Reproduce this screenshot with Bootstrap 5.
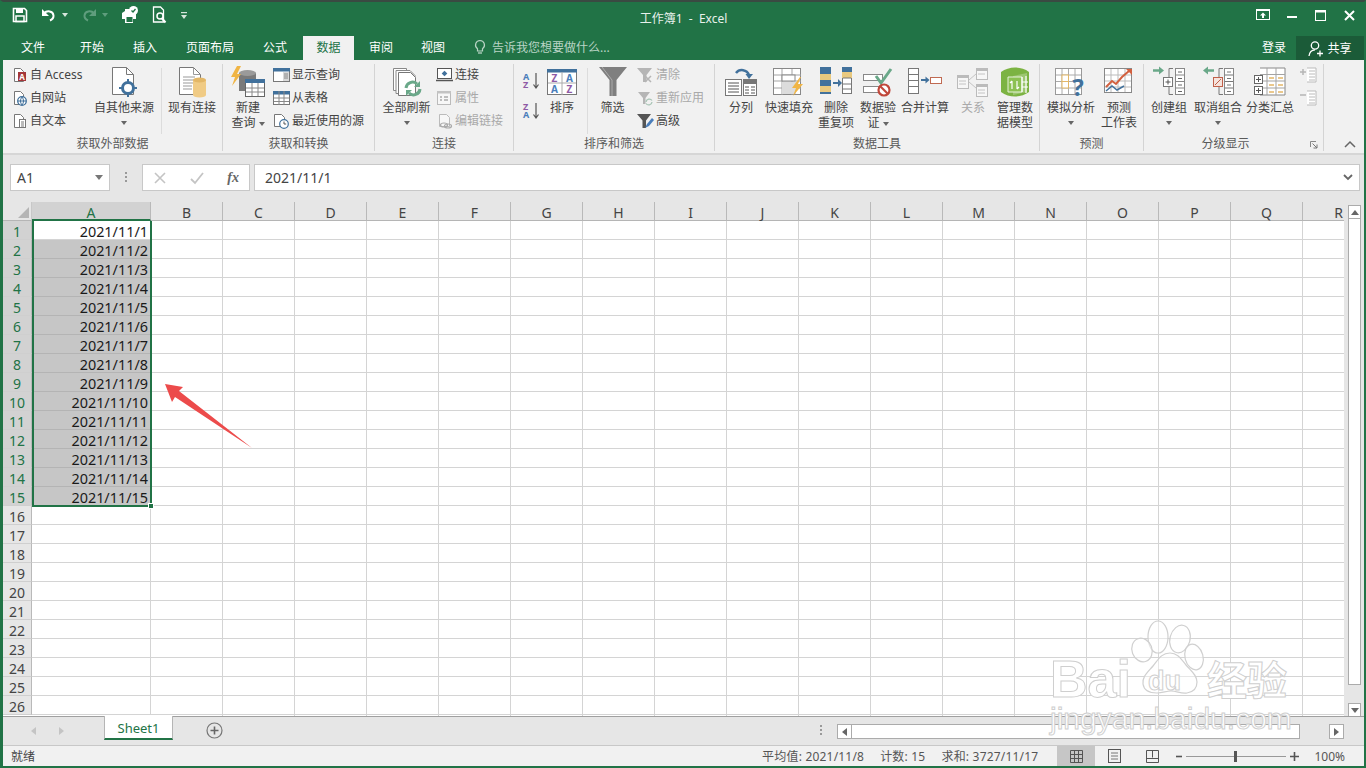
<!DOCTYPE html>
<html lang="zh-CN">
<head>
<meta charset="utf-8">
<title>工作簿1 - Excel</title>
<link href="https://cdn.jsdelivr.net/npm/bootstrap@5.3.0/dist/css/bootstrap.min.css" rel="stylesheet">
<style>
html,body{margin:0;height:768px;overflow:hidden;background:#fff}
body{font:12px/15px "Noto Sans","Noto Sans CJK SC",sans-serif;color:#444}
svg{display:block;flex:none;overflow:visible}
svg text{font-family:"Noto Sans",sans-serif}
.xl-app{width:1366px;height:768px;border:2px solid #217346;border-top-color:#3a4a42;border-left-width:3px;position:relative;overflow:hidden}
.xl-title{height:34px;background:#217346;color:#fff;display:grid;grid-template-columns:1fr auto 1fr;align-items:center}
.xl-qat{padding-left:9px;margin-bottom:8px}
.xl-qat svg{margin-right:5px}
.xl-name{font-size:12px;color:#e8f1ec;margin-bottom:2px}
.xl-win{justify-content:flex-end;margin-bottom:8px}
.xl-winbtn{width:29px;display:flex;justify-content:center}
.xl-tabs{height:24px;background:#217346;color:#fff;align-items:stretch;flex-wrap:nowrap}
.xl-tab{display:flex;align-items:center;justify-content:center;color:#fff;padding:0 0 2px;height:24px}
.xl-tab:hover{color:#fff}
.xl-tab.sel{background:#f1f1f1;color:#217346}
.t60{width:60px;margin-right:4px}.t50{width:50px}.t56{width:56px}.t74{width:74px}.t51{width:51px}.t54{width:54px}
.xl-tell{margin-left:16px;color:#b9d4c5;gap:6px;padding-bottom:2px}
.xl-login{margin-left:auto;width:44px;justify-content:center;display:flex;align-items:center;color:#fff;padding-bottom:2px}
.xl-share{width:68px;background:#1b5b38;color:#fff;gap:3px;display:flex;align-items:center;justify-content:center}
.xl-ribbon{height:93px;background:#f1f1f1;padding:4px 0 2px;border-bottom:0}
.xl-grp{display:flex;flex-direction:column;border-right:1px solid #d4d4d4;flex:none;position:relative}
.xl-grpbody{flex:1 1 auto;display:flex;align-items:flex-start}
.xl-grplabel{height:15px;text-align:center;color:#5a5a5a;line-height:15px;white-space:nowrap}
.g1{width:220px}.g2{width:152px}.g3{width:139px}.g4{width:201px}.g5{width:325px}.g6{width:104px}.g7{width:180px}
.xl-big{display:flex;flex-direction:column;align-items:center;padding-top:2px;flex:none;text-align:center;white-space:nowrap;line-height:15px}
.xl-big svg{margin-bottom:2px}
.w34{width:34px}.w38{width:38px}.w40{width:40px}.w44{width:44px}.w46{width:46px}.w48{width:48px}.w49{width:49px}.w50{width:50px}.w56{width:56px}.w59{width:59px}.w60{width:60px}.w62{width:62px}.w68{width:68px}
.xl-small{display:flex;flex-direction:column;margin-top:-1px;flex:none}
.xl-srow{height:23px;display:flex;align-items:center;gap:2px;white-space:nowrap}
.xl-sort{display:flex;flex-direction:column;gap:13px;margin-left:9px;padding-top:8px;width:19px;flex:none}
.off{color:#a9a9a9}
.xl-sep{width:1px;height:66px;background:#dcdcdc;margin-top:4px;flex:none}
.ml2{margin-left:2px}.ml3{margin-left:3px}.ml5{margin-left:5px}.ml9{margin-left:9px}
.sw78{width:78px}
.xl-tools{padding-left:2px}
.xl-caret{width:0;height:0;border:3px solid transparent;border-top:4px solid #666;border-bottom:0;display:inline-block;vertical-align:middle}
.xl-caretrow{height:15px;display:flex;align-items:center;justify-content:center}
.xl-launch{position:absolute;right:5px;bottom:2px}
.xl-lab-outline{padding-right:16px}
.xl-collapse{flex:1 1 auto;display:flex;justify-content:flex-end;align-items:flex-end;padding:0 8px 3px 0}
.xl-band{height:2px;background:#d6d6d6}
.xl-fbar{height:47px;background:#e6e6e6;padding:9px 4px 11px 7px;align-items:stretch}
.xl-box{background:#fff;border:1px solid #c8c8c8;display:flex;align-items:center}
.xl-namebox{width:100px;padding:0 6px;font-size:14px;color:#444;justify-content:space-between}
.xl-dots{width:32px;color:#999;justify-content:center;display:flex;align-items:center}
.xl-fxbox{width:108px;justify-content:space-between;padding:0 10px 0 11px;margin-right:4px}
.xl-fx{font:italic 700 14px "Liberation Serif",serif;color:#666}
.xl-formula{flex:1 1 auto;padding:0 6px 0 10px;font-size:14px;color:#444;justify-content:space-between}
.xl-sheet{height:514px;overflow:hidden}
.xl-main{width:1341px;flex:none;overflow:hidden}
.xl-colhead{height:19px;background:#e6e6e6;color:#444;font-size:14px;overflow:hidden}
.xl-corner{width:29px;flex:none;display:flex;justify-content:flex-end;align-items:flex-end;padding:0 2px 2px 0;border-bottom:1px solid #b5b5b5;border-right:1px solid #c8c8c8}
.xl-ch{width:72px;flex:none;text-align:center;line-height:21px;border-right:1px solid #b9b9b9;border-bottom:1px solid #b5b5b5}
.xl-ch.wide{width:119px;background:#d2d2d2;color:#217346;border-bottom:2px solid #217346}
.xl-body{height:495px;position:relative;overflow:hidden}
.xl-rows{width:29px;flex:none}
.xl-rn{height:19px;background:#e6e6e6;border-bottom:1px solid #cfcfcf;border-right:1px solid #b9b9b9;font-size:14px;line-height:21px;text-align:center;color:#444}
.xl-rn.sel{background:#d2d2d2;color:#217346}
.xl-cola{width:119px;flex:none}
.xl-c{height:19px;border-right:1px solid #d4d4d4;border-bottom:1px solid #d4d4d4;font-size:14.4px;line-height:21px;text-align:right;padding-right:2px;color:#1a1a1a}
.xl-c.sel{background:#c6c6c6;border-color:#b4b4b4}
.xl-c.act{background:#fff}
.xl-rest{flex:1 1 auto;background-image:linear-gradient(to left,#d4d4d4 1px,transparent 1px),linear-gradient(to top,#d4d4d4 1px,transparent 1px);background-size:72px 100%,100% 19px}
.xl-range{position:absolute;left:29px;top:-2px;width:120px;height:288px;border:2px solid #217346;pointer-events:none}
.xl-handle{position:absolute;right:-4px;bottom:-4px;background:#217346;border:1px solid #fff;box-sizing:content-box;width:4px;height:4px}
.xl-arrow{position:absolute;left:0;top:0}
.xl-vs{width:20px;flex:none;background:#e6e6e6;padding:3px 3px 0 4px}
.xl-sbtn{background:#fff;border:1px solid #ababab;display:flex;align-items:center;justify-content:center;flex:none}
.xl-vbtn{height:14px}
.xl-vthumb{height:466px;background:#fff;border:1px solid #ababab;border-top:0}
.xl-vtrack{height:18px}
.xl-bar{height:29px;background:#e6e6e6;border-top:1px solid #a0a0a0;margin-right:0}
.xl-nav{width:101px;padding-left:28px;gap:23px;align-items:center}
.xl-stab{width:69px;height:24px;background:#fff;border-bottom:2px solid #217346;color:#217346;font-size:13px;text-align:center;line-height:24px;margin-top:-1px;border-left:1px solid #b5b5b5;border-right:1px solid #b5b5b5}
.xl-plus{margin-left:33px;margin-top:5px}
.xl-vdots{margin-left:597px;margin-top:8px}
.xl-hs{margin-left:14px;margin-top:7px;width:507px;height:15px;align-items:stretch}
.xl-hbtn{width:15px}
.xl-hthumb{width:448px;background:#fff;border:1px solid #ababab;border-left:0;flex:none}
.xl-htrack{flex:1 1 auto}
.xl-status{height:21px;background:#f1f1f1;border-top:1px solid #c8c8c8;align-items:center;padding-left:8px;white-space:nowrap;color:#444;font-size:12px}
.xl-stats{margin-left:auto;gap:16px;color:#555;letter-spacing:.2px}
.xl-views{margin-left:19px;align-items:center;height:20px}
.xl-view{width:38px;height:20px;display:flex;align-items:center;justify-content:center}
.xl-view.sel{background:#c6c6c6}
.xl-zoomer{margin-left:5px;gap:3px;align-items:center}
.xl-pct{margin-left:14px;margin-right:19px;color:#555}
.xl-mark{position:absolute;left:1037px;top:613px;pointer-events:none}
.xl-mark text{font-family:"Liberation Sans",sans-serif;fill:#fff;stroke:#cfcfcf;stroke-width:1}
.xl-mark .cjk{font-family:"Noto Sans CJK SC",sans-serif}
</style>
</head>
<body>
<div class="xl-app d-flex flex-column">

<!-- title bar -->
<div class="xl-title">
  <div class="xl-qat d-flex align-items-center">
    <svg width="16" height="16" viewBox="0 0 16 16"><path d="M1.500 1.500h11l2 2v11h-13z" fill="none" stroke="#fff" stroke-width="1.600"/><rect x="4" y="1.500" width="7" height="4.500" fill="#fff"/><rect x="4" y="9" width="8" height="5.500" fill="none" stroke="#fff" stroke-width="1.500"/></svg>
    <svg class="ms-2" width="16" height="16" viewBox="0 0 16 16"><path d="M3 6.500c3-3.500 9-2.500 9.500 2 .2 2.300-1.300 4-3.500 5" fill="none" stroke="#fff" stroke-width="2"/><path d="M1 2v7h7z" fill="#fff"/></svg>
    <svg width="6" height="4" viewBox="0 0 6 4"><path d="M0 0h6L3 4z" fill="#d6e6dc"/></svg>
    <svg class="ms-2" width="16" height="16" viewBox="0 0 16 16"><path d="M13 6.500c-3-3.500-9-2.500-9.500 2-.2 2.300 1.300 4 3.500 5" fill="none" stroke="#5f9d7d" stroke-width="2"/><path d="M15 2v7H8z" fill="#5f9d7d"/></svg>
    <svg width="6" height="4" viewBox="0 0 6 4"><path d="M0 0h6L3 4z" fill="#5f9d7d"/></svg>
    <svg class="ms-2" width="18" height="18" viewBox="0 0 18 18"><path d="M1 7l3-2v-2h5v2h3l3 2v6h-3v4H4v-4H1z" fill="#fff"/><rect x="5.500" y="11" width="6" height="5" fill="#217346"/><circle cx="12.500" cy="4.500" r="4.500" fill="#fff"/><path d="M10.500 4.500l1.500 1.500 2.500-3" fill="none" stroke="#217346" stroke-width="1.300"/></svg>
    <svg class="ms-2" width="16" height="18" viewBox="0 0 16 18"><path d="M1.500 1h7l3 3v12h-10z" fill="none" stroke="#fff" stroke-width="1.300"/><circle cx="8" cy="10" r="3" fill="#217346" stroke="#fff" stroke-width="1.500"/><path d="M10 12.500l3.500 4" stroke="#fff" stroke-width="2"/></svg>
    <svg class="ms-2" width="6" height="7" viewBox="0 0 6 7"><rect width="6" height="1.200" fill="#d6e6dc"/><path d="M0 3h6L3 7z" fill="#d6e6dc"/></svg>
  </div>
  <div class="xl-name">工作簿1&nbsp; -&nbsp; Excel</div>
  <div class="xl-win d-flex align-items-center">
    <div class="xl-winbtn"><svg width="14" height="12" viewBox="0 0 14 12"><rect x=".5" y=".5" width="13" height="10" fill="none" stroke="#fff"/><rect x="0" y="0" width="14" height="2" fill="#fff"/><path d="M7 3.500l-3 3h2v2.500h2V6.500h2z" fill="#fff"/></svg></div>
    <div class="xl-winbtn"><svg width="10" height="10" viewBox="0 0 10 10"><rect y="6" width="10" height="2" fill="#fff"/></svg></div>
    <div class="xl-winbtn"><svg width="11" height="11" viewBox="0 0 11 11"><rect x=".5" y=".5" width="10" height="10" fill="none" stroke="#fff"/><rect width="11" height="2.500" fill="#fff"/></svg></div>
    <div class="xl-winbtn"><svg width="11" height="11" viewBox="0 0 11 11"><path d="M1 1l9 9M10 1l-9 9" stroke="#fff" stroke-width="2"/></svg></div>
  </div>
</div>

<!-- tabs -->
<div class="nav xl-tabs">
  <a class="nav-link xl-tab t60" href="#">文件</a>
  <a class="nav-link xl-tab t50" href="#">开始</a>
  <a class="nav-link xl-tab t56" href="#">插入</a>
  <a class="nav-link xl-tab t74" href="#">页面布局</a>
  <a class="nav-link xl-tab t56" href="#">公式</a>
  <a class="nav-link xl-tab t51 sel" href="#">数据</a>
  <a class="nav-link xl-tab t54" href="#">审阅</a>
  <a class="nav-link xl-tab t50" href="#">视图</a>
  <div class="d-flex align-items-center xl-tell">
    <svg width="12" height="16" viewBox="0 0 12 16"><path d="M6 1.500a4.500 4.500 0 0 0-2.500 8.200V12h5V9.700A4.500 4.500 0 0 0 6 1.500z" fill="none" stroke="#b9d4c5" stroke-width="1.200"/><path d="M4 14h4" stroke="#b9d4c5" stroke-width="1.300"/></svg>
    <span>告诉我您想要做什么...</span>
  </div>
  <div class="xl-login">登录</div>
  <div class="xl-share"><svg width="16" height="17" viewBox="0 0 16 17"><circle cx="7" cy="5.500" r="3.700" fill="none" stroke="#fff" stroke-width="1.300"/><path d="M1 16c.5-4 2.500-6 6-6.200" fill="none" stroke="#fff" stroke-width="1.300"/><path d="M9 13.500h6M12 10.500v6" stroke="#fff" stroke-width="1.300"/></svg><span>共享</span></div>
</div>

<!-- ribbon -->
<div class="xl-ribbon d-flex">

  <div class="xl-grp g1">
    <div class="xl-grpbody">
      <div class="xl-small ml9 sw78">
        <div class="xl-srow"><svg width="16" height="16" viewBox="0 0 16 16"><path d="M2.500 1.500h6l3 3v10h-9z" fill="#fff" stroke="#777"/><rect x="6" y="5" width="8" height="9" fill="#a4373a"/><text x="10" y="12.500" font-size="8" font-weight="700" fill="#fff" text-anchor="middle">A</text></svg><span>自 Access</span></div>
        <div class="xl-srow"><svg width="16" height="16" viewBox="0 0 16 16"><path d="M2.500 1.500h6l3 3v10h-9z" fill="#fff" stroke="#777"/><circle cx="10" cy="11" r="4.300" fill="#fff" stroke="#41719c" stroke-width="1.300"/><path d="M6 11h8M10 7c-2 2.500-2 5.500 0 8M10 7c2 2.500 2 5.500 0 8" fill="none" stroke="#41719c"/></svg><span>自网站</span></div>
        <div class="xl-srow"><svg width="16" height="16" viewBox="0 0 16 16"><path d="M2.500 1.500h6l3 3v10h-9z" fill="#fff" stroke="#777"/><rect x="7.500" y="6.500" width="6" height="8" fill="#fff" stroke="#777"/><path d="M9 9h3M9 11h3M9 13h3" stroke="#777"/></svg><span>自文本</span></div>
      </div>
      <div class="xl-big w68">
        <svg width="32" height="32" viewBox="0 0 32 32"><path d="M4.500 1.500h14l7 7v20h-21z" fill="#fff" stroke="#777"/><path d="M18.500 1.500v7h7" fill="none" stroke="#777"/><circle cx="20" cy="22" r="5.500" fill="#fff" stroke="#41719c" stroke-width="3"/><path d="M20 13v4M20 27v4M11 22h4M25 22h4" stroke="#41719c" stroke-width="2"/></svg>
        <span>自其他来源</span>
        <div class="xl-caretrow"><i class="xl-caret"></i></div>
      </div>
      <div class="xl-sep ml3"></div>
      <div class="xl-big w60">
        <svg width="32" height="32" viewBox="0 0 32 32"><path d="M3.500 1.500h14l7 7v20h-21z" fill="#fff" stroke="#777"/><path d="M17.500 1.500v7h7M7 11h12M7 14h12M7 17h12M7 20h9M7 23h9" fill="none" stroke="#999"/><path d="M17 14h13v15a6.500 2.500 0 0 1-13 0z" fill="#f0cb85"/><ellipse cx="23.500" cy="14" rx="6.500" ry="2.500" fill="#e3b767"/></svg>
        <span>现有连接</span>
      </div>
    </div>
    <div class="xl-grplabel">获取外部数据</div>
  </div>

  <div class="xl-grp g2">
    <div class="xl-grpbody">
      <div class="xl-big w50">
        <svg width="34" height="32" viewBox="0 0 34 32"><path d="M8 7h17v18H8z" fill="#7a7a7a"/><ellipse cx="16.500" cy="7" rx="8.500" ry="3" fill="#9a9a9a"/><path d="M6 0L0 11h4l-3 9 9-12H6l4-8z" fill="#f0b545"/><rect x="14.500" y="13.500" width="19" height="17" fill="#fff" stroke="#666"/><rect x="14" y="13" width="20" height="4" fill="#41719c"/><path d="M21 17v13M27 17v13M15 22h18M15 26h18" stroke="#888"/></svg>
        <span>新建</span>
        <span>查询 <i class="xl-caret"></i></span>
      </div>
      <div class="xl-small">
        <div class="xl-srow"><svg width="17" height="16" viewBox="0 0 17 16"><rect x=".5" y="1.500" width="16" height="13" fill="#fff" stroke="#777"/><rect y="1" width="17" height="3.500" fill="#41719c"/><rect x="10" y="5" width="6" height="9" fill="#d9d9d9"/><path d="M11 7h4M11 9h4M11 11h4" stroke="#888"/></svg><span>显示查询</span></div>
        <div class="xl-srow"><svg width="17" height="16" viewBox="0 0 17 16"><rect x=".5" y="1.500" width="16" height="13" fill="#fff" stroke="#777"/><rect y="1" width="17" height="3.500" fill="#41719c"/><path d="M6 1v14M11 1v14M1 8h15M1 11.500h15" stroke="#888"/></svg><span>从表格</span></div>
        <div class="xl-srow"><svg width="17" height="16" viewBox="0 0 17 16"><path d="M1.500 1.500h7l3 3v9h-10z" fill="#fff" stroke="#777"/><circle cx="11" cy="11" r="4.300" fill="#fff" stroke="#41719c" stroke-width="1.200"/><path d="M11 8.500V11h2.200" fill="none" stroke="#555"/></svg><span>最近使用的源</span></div>
      </div>
    </div>
    <div class="xl-grplabel">获取和转换</div>
  </div>

  <div class="xl-grp g3">
    <div class="xl-grpbody">
      <div class="xl-big w59 ml2">
        <svg width="32" height="32" viewBox="0 0 32 32"><path d="M2.500 2.500h13v22h-13z" fill="#fff" stroke="#888"/><path d="M5 4.500h14l5 5v18H5z" fill="#fff" stroke="#888"/><path d="M7.500 6.500h12l5 5v18h-17z" fill="#fff" stroke="#777"/><path d="M15 22a6.500 6.500 0 0 1 11-4" fill="none" stroke="#6aa889" stroke-width="3"/><path d="M29 15v6h-6z" fill="#6aa889"/><path d="M29 23a6.500 6.500 0 0 1-11 4" fill="none" stroke="#6aa889" stroke-width="3"/><path d="M15 30v-6h6z" fill="#6aa889"/></svg>
        <span>全部刷新</span>
        <div class="xl-caretrow"><i class="xl-caret"></i></div>
      </div>
      <div class="xl-small">
        <div class="xl-srow"><svg width="17" height="16" viewBox="0 0 17 16"><rect x="1.500" y="1.500" width="14" height="10" fill="#fff" stroke="#555"/><path d="M0 13.500h17" stroke="#555" stroke-width="1.500"/><rect x="6.500" y="4.500" width="4" height="4" fill="#41719c" transform="rotate(45 8.500 6.500)"/></svg><span>连接</span></div>
        <div class="xl-srow off"><svg width="17" height="16" viewBox="0 0 17 16"><rect x="1.500" y="1.500" width="13" height="13" fill="#f7f7f7" stroke="#bbb"/><rect x="1" y="1" width="14" height="2.500" fill="#c3c3c3"/><path d="M4 7h2M8 7h4M4 10h2M8 10h4" stroke="#aaa" stroke-width="1.300"/></svg><span>属性</span></div>
        <div class="xl-srow off"><svg width="17" height="16" viewBox="0 0 17 16"><path d="M3.500 1.500h7l3 3v9h-10z" fill="#f7f7f7" stroke="#bbb"/><ellipse cx="8" cy="12" rx="3.500" ry="2" fill="none" stroke="#aaa" stroke-width="1.200"/><ellipse cx="12" cy="13" rx="3.500" ry="2" fill="none" stroke="#aaa" stroke-width="1.200"/></svg><span>编辑链接</span></div>
      </div>
    </div>
    <div class="xl-grplabel">连接</div>
  </div>

  <div class="xl-grp g4">
    <div class="xl-grpbody">
      <div class="xl-sort">
        <svg width="18" height="17" viewBox="0 0 18 17"><text x="0" y="7.500" font-size="9" font-weight="700" fill="#4a7ebb">A</text><text x="0" y="16" font-size="9" font-weight="700" fill="#8e5aa5">Z</text><path d="M13 1v15M10.500 12.500l2.500 3.500 2.500-3.500" fill="none" stroke="#555" stroke-width="1.200"/></svg>
        <svg width="18" height="17" viewBox="0 0 18 17"><text x="0" y="7.500" font-size="9" font-weight="700" fill="#8e5aa5">Z</text><text x="0" y="16" font-size="9" font-weight="700" fill="#4a7ebb">A</text><path d="M13 1v15M10.500 12.500l2.500 3.500 2.500-3.500" fill="none" stroke="#555" stroke-width="1.200"/></svg>
      </div>
      <div class="xl-big w40">
        <svg width="30" height="32" viewBox="0 0 30 26"><rect x=".5" y=".5" width="29" height="25" fill="#fff" stroke="#777"/><rect width="30" height="3.500" fill="#41719c"/><path d="M15 3v23M1 14h28" stroke="#aaa"/><text x="7.500" y="13" font-size="10" font-weight="700" fill="#8e5aa5" text-anchor="middle">Z</text><text x="22.500" y="13" font-size="10" font-weight="700" fill="#4a7ebb" text-anchor="middle">A</text><text x="7.500" y="24" font-size="10" font-weight="700" fill="#4a7ebb" text-anchor="middle">A</text><text x="22.500" y="24" font-size="10" font-weight="700" fill="#8e5aa5" text-anchor="middle">Z</text></svg>
        <span>排序</span>
      </div>
      <div class="xl-sep ml5"></div>
      <div class="xl-big w49">
        <svg width="30" height="32" viewBox="0 0 30 32"><path d="M1 1h28L18.500 14v16h-7V14z" fill="#7f7f7f"/><path d="M4 1l10 13v16" fill="none" stroke="#ababab"/></svg>
        <span>筛选</span>
      </div>
      <div class="xl-small">
        <div class="xl-srow off"><svg width="17" height="16" viewBox="0 0 17 16"><path d="M0 1h15L9.500 8v7H6V8z" fill="#b5b5b5"/><path d="M8 9l6 6M14 9l-6 6" stroke="#b5b5b5" stroke-width="1.500"/></svg><span>清除</span></div>
        <div class="xl-srow off"><svg width="17" height="16" viewBox="0 0 17 16"><path d="M1 2h12L8.500 8v6H6V8z" fill="#b5b5b5"/><path d="M9 12a3.300 3.300 0 0 1 6-1.500M15 12a3.300 3.300 0 0 1-6 1.500" fill="none" stroke="#a9c5b6" stroke-width="1.300"/></svg><span>重新应用</span></div>
        <div class="xl-srow"><svg width="17" height="16" viewBox="0 0 17 16"><path d="M0 1h14L9 7.500V15H5.500V7.500z" fill="#555"/><path d="M8 15l2-4 5-6 2 2-5 6z" fill="#4a7ebb"/></svg><span>高级</span></div>
      </div>
    </div>
    <div class="xl-grplabel">排序和筛选</div>
  </div>

  <div class="xl-grp g5">
    <div class="xl-grpbody xl-tools">
      <div class="xl-big w48">
        <svg width="32" height="32" viewBox="0 0 32 32"><path d="M11 7a7.500 7.500 0 0 1 13 2" fill="none" stroke="#41719c" stroke-width="2.500"/><path d="M20.500 8h7.500l-4 5z" fill="#41719c"/><rect x=".5" y="13.500" width="16" height="16" fill="#fff" stroke="#777"/><path d="M3 17h11M3 20h11M3 23h11M3 26h11" stroke="#555"/><rect x="18.500" y="13.500" width="13" height="16" fill="#fff" stroke="#777"/><rect x="18" y="13" width="14" height="5" fill="#777"/><path d="M20 21h4M26 21h4M20 24h4M26 24h4M20 27h4M26 27h4" stroke="#555"/></svg>
        <span>分列</span>
      </div>
      <div class="xl-big w48">
        <svg width="32" height="32" viewBox="0 0 32 32"><rect x=".5" y="2.500" width="27" height="26" fill="#fff" stroke="#888"/><path d="M1 9h27M1 15h27M1 22h27M9 3v26M19 3v26" stroke="#a3a3a3"/><rect x="9" y="9" width="13" height="6" fill="#fff" stroke="#888"/><rect x="9" y="16" width="14" height="12" fill="#dcdcdc"/><path d="M27 11l-8 11h4l-3 8 10-12h-5l3-7z" fill="#f0b545"/></svg>
        <span>快速填充</span>
      </div>
      <div class="xl-big w46">
        <svg width="32" height="32" viewBox="0 0 32 32"><rect width="11" height="7" y="1" fill="#41719c"/><rect width="11" height="6" y="8" fill="#e9c97f"/><rect width="11" height="6" y="14" fill="#41719c"/><rect width="11" height="6" y="20" fill="#e9c97f"/><rect width="11" height="2" y="26" fill="#41719c"/><path d="M13 17h6" stroke="#41719c" stroke-width="2"/><path d="M18 13v8l4-4z" fill="#41719c"/><rect x="22.500" y="1.500" width="9" height="26" fill="#fff" stroke="#777"/><rect x="22" y="1" width="10" height="5" fill="#41719c"/><rect x="22" y="6" width="10" height="6" fill="#e9c97f"/><path d="M23 12h8M23 18h8M23 23h8" stroke="#777"/></svg>
        <span>删除</span><span>重复项</span>
      </div>
      <div class="xl-big w38">
        <svg width="30" height="32" viewBox="0 0 30 32"><rect x=".5" y="8.500" width="19" height="6" fill="#fff" stroke="#888"/><rect x=".5" y="20.500" width="19" height="6" fill="#fff" stroke="#888"/><path d="M13 10l5 7 10-14" fill="none" stroke="#6aa889" stroke-width="3"/><circle cx="21" cy="24" r="5.500" fill="#fff" stroke="#c0473a" stroke-width="2.200"/><path d="M17 20l8 8" stroke="#c0473a" stroke-width="2.200"/></svg>
        <span>数据验</span><span>证 <i class="xl-caret"></i></span>
      </div>
      <div class="xl-big w56">
        <svg width="34" height="32" viewBox="0 0 34 32"><rect x=".5" y="2.500" width="10" height="25" fill="#fff" stroke="#777"/><path d="M1 8.500h10M1 14.500h10M1 20.500h10" stroke="#777"/><path d="M13 14h6" stroke="#41719c" stroke-width="2"/><path d="M17.500 10.500v7l4-3.500z" fill="#41719c"/><rect x="22.500" y="11.500" width="11" height="6" fill="#fff" stroke="#c06a52"/></svg>
        <span>合并计算</span>
      </div>
      <div class="xl-big w40 off">
        <svg width="32" height="32" viewBox="0 0 32 32"><rect x=".5" y="9.500" width="11" height="13" fill="#f7f7f7" stroke="#bbb"/><rect y="9" width="12" height="3" fill="#bbb"/><rect x="19.500" y="2.500" width="11" height="11" fill="#f7f7f7" stroke="#bbb"/><rect x="19" y="2" width="12" height="3" fill="#bbb"/><rect x="19.500" y="18.500" width="11" height="12" fill="#f7f7f7" stroke="#bbb"/><rect x="19" y="18" width="12" height="3" fill="#bbb"/><path d="M12 14l7-6M12 16l7 6M2 15h7M2 18h7M21 8h7M21 24h7M21 27h7" stroke="#c4c4c4"/></svg>
        <span>关系</span>
      </div>
      <div class="xl-big w44">
        <svg width="30" height="32" viewBox="0 0 30 32"><path d="M1 6c8-6 20-6 28 0v20c-8 6-20 6-28 0z" fill="#7cb342"/><path d="M13 10l14-3v19l-14 3z" fill="#fff" opacity=".25"/><path d="M8 11h14v15H8z" fill="#8cc152" stroke="#e6f2d9"/><path d="M12 15v8M12 15l-2 2M17 23v-8M17 23l2-2M22 11v15M22 16h6M22 21h6M26 10v17" fill="none" stroke="#fff" stroke-width="1.200"/></svg>
        <span>管理数</span><span>据模型</span>
      </div>
    </div>
    <div class="xl-grplabel">数据工具</div>
  </div>

  <div class="xl-grp g6">
    <div class="xl-grpbody">
      <div class="xl-big w62">
        <svg width="32" height="32" viewBox="0 0 32 32"><rect x=".5" y="2.500" width="26" height="26" fill="#fff" stroke="#999"/><path d="M7 3v25M13.500 3v25M20 3v25M1 9h25M1 15.500h25M1 22h25" stroke="#aaa"/><rect x="7" y="9" width="6.500" height="6.500" fill="#fff" stroke="#e3b767"/><rect x="7" y="15.500" width="6.500" height="6.500" fill="#fff" stroke="#e3b767"/><text x="23" y="30" font-size="24" font-weight="700" fill="#41719c" text-anchor="middle">?</text></svg>
        <span>模拟分析</span>
        <div class="xl-caretrow"><i class="xl-caret"></i></div>
      </div>
      <div class="xl-big w34">
        <svg width="30" height="32" viewBox="0 0 30 32"><rect x=".5" y="2.500" width="27" height="24" fill="#fff" stroke="#888"/><path d="M7 3v23M14 3v23M21 3v23M1 9h26M1 15h26M1 21h26" stroke="#bbb"/><path d="M2 21l6-6 4 3 6-7 7-6" fill="none" stroke="#d2603f" stroke-width="2"/><path d="M22 3h6v6z" fill="#d2603f"/><path d="M2 25l6-5 5 4 7-4" fill="none" stroke="#41719c" stroke-width="1.500"/></svg>
        <span>预测</span><span>工作表</span>
      </div>
    </div>
    <div class="xl-grplabel">预测</div>
  </div>

  <div class="xl-grp g7">
    <div class="xl-grpbody">
      <div class="xl-big w50">
        <svg width="32" height="32" viewBox="0 0 32 32"><path d="M0 4.500h8" stroke="#6aa889" stroke-width="2.500"/><path d="M6 .5v8l5-4z" fill="#6aa889"/><path d="M20 2.500h-4v26h4" fill="none" stroke="#777"/><rect x="10.500" y="11.500" width="9" height="9" fill="#fff" stroke="#777"/><path d="M12.500 16h5M15 13.500v5" stroke="#555"/><rect x="22.500" y="2.500" width="9" height="26" fill="#fff" stroke="#888"/><path d="M23 9h8M23 15.500h8M23 22h8" stroke="#888"/><path d="M25 6h4M25 12.500h4M25 19h4M25 25.500h4" stroke="#666"/></svg>
        <span>创建组</span>
        <div class="xl-caretrow"><i class="xl-caret"></i></div>
      </div>
      <div class="xl-big w48">
        <svg width="32" height="32" viewBox="0 0 32 32"><path d="M4 4.500h8" stroke="#6aa889" stroke-width="2.500"/><path d="M6 .5v8l-5-4z" fill="#6aa889"/><path d="M21 2.500h-4v26h4" fill="none" stroke="#777"/><rect x="11.500" y="11.500" width="9" height="9" fill="#f6e3dc" stroke="#c0604a"/><path d="M13 19l6-6" stroke="#c0604a"/><rect x="22.500" y="2.500" width="9" height="26" fill="#fff" stroke="#888"/><path d="M23 9h8M23 15.500h8M23 22h8M25 6h4M25 12.500h4M25 19h4M25 25.500h4" stroke="#777"/></svg>
        <span>取消组合</span>
        <div class="xl-caretrow"><i class="xl-caret"></i></div>
      </div>
      <div class="xl-big w50 ml3">
        <svg width="32" height="32" viewBox="0 0 32 32"><path d="M6 2h25v27H6" fill="#fff" stroke="#888"/><path d="M13 2v27M22 2v27M6 8.500h25M6 15h25M6 22h25" stroke="#a3a3a3"/><rect x=".5" y="9.500" width="8" height="8" fill="#fff" stroke="#666"/><path d="M2 13.500h5M4.500 11v5" stroke="#555"/><rect x=".5" y="20.500" width="8" height="8" fill="#fff" stroke="#666"/><path d="M2 24.500h5M4.500 22v5" stroke="#555"/><path d="M15 12h5M24 12h5M15 19h5M24 19h5M15 26h5M24 26h5" stroke="#e3b767" stroke-width="1.300"/></svg>
        <span>分类汇总</span>
      </div>
      <div class="xl-small ml5">
        <div class="xl-srow"><svg width="17" height="16" viewBox="0 0 17 16"><path d="M0 5h6M3 2v6" stroke="#b5b5b5" stroke-width="1.500"/><path d="M7 1h9v14H7" fill="#fff" stroke="#bbb"/><path d="M9 4h6M9 7h6M9 10h6M9 13h6" stroke="#bbb"/></svg></div>
        <div class="xl-srow"><svg width="17" height="16" viewBox="0 0 17 16"><path d="M0 5h6" stroke="#b5b5b5" stroke-width="1.500"/><path d="M7 1h9v14H7" fill="#fff" stroke="#bbb"/><path d="M9 4h6M9 7h6M9 10h6M9 13h6" stroke="#bbb"/></svg></div>
      </div>
    </div>
    <div class="xl-grplabel xl-lab-outline">分级显示</div>
    <svg class="xl-launch" width="8" height="8" viewBox="0 0 8 8"><path d="M.5 6V.5H6" fill="none" stroke="#888"/><path d="M2.500 2.500L7 7M7 3.500V7H3.500" fill="none" stroke="#777"/></svg>
  </div>

  <div class="xl-collapse"><svg width="12" height="8" viewBox="0 0 12 8"><path d="M1 7l5-5 5 5" fill="none" stroke="#666" stroke-width="1.500"/></svg></div>
</div>
<div class="xl-band"></div>

<!-- formula bar -->
<div class="xl-fbar d-flex">
  <div class="xl-box xl-namebox"><span>A1</span><svg width="8" height="5" viewBox="0 0 8 5"><path d="M0 0h8L4 5z" fill="#777"/></svg></div>
  <div class="xl-dots"><svg width="3" height="12" viewBox="0 0 3 12"><path d="M0 1h2M0 5h2M0 9h2" stroke="#999" stroke-width="2"/></svg></div>
  <div class="xl-box xl-fxbox">
    <svg width="12" height="12" viewBox="0 0 12 12"><path d="M1 1l10 10M11 1L1 11" stroke="#c4c4c4" stroke-width="1.600"/></svg>
    <svg width="14" height="12" viewBox="0 0 14 12"><path d="M1 7l4 4 8-10" fill="none" stroke="#c4c4c4" stroke-width="1.800"/></svg>
    <span class="xl-fx">fx</span>
  </div>
  <div class="xl-box xl-formula"><span>2021/11/1</span><svg width="10" height="7" viewBox="0 0 10 7"><path d="M1 1l4 4 4-4" fill="none" stroke="#666" stroke-width="1.800"/></svg></div>
</div>

<!-- sheet -->
<div class="xl-sheet d-flex">
  <div class="xl-main">
    <div class="xl-colhead d-flex">
      <div class="xl-corner"><svg width="11" height="11" viewBox="0 0 11 11"><path d="M11 0v11H0z" fill="#b5b5b5"/></svg></div>
      <div class="xl-ch wide">A</div><div class="xl-ch">B</div><div class="xl-ch">C</div><div class="xl-ch">D</div><div class="xl-ch">E</div><div class="xl-ch">F</div><div class="xl-ch">G</div><div class="xl-ch">H</div><div class="xl-ch">I</div><div class="xl-ch">J</div><div class="xl-ch">K</div><div class="xl-ch">L</div><div class="xl-ch">M</div><div class="xl-ch">N</div><div class="xl-ch">O</div><div class="xl-ch">P</div><div class="xl-ch">Q</div><div class="xl-ch">R</div>
    </div>
    <div class="xl-body d-flex">
      <div class="xl-rows">
        <div class="xl-rn sel">1</div><div class="xl-rn sel">2</div><div class="xl-rn sel">3</div><div class="xl-rn sel">4</div><div class="xl-rn sel">5</div><div class="xl-rn sel">6</div><div class="xl-rn sel">7</div><div class="xl-rn sel">8</div><div class="xl-rn sel">9</div><div class="xl-rn sel">10</div><div class="xl-rn sel">11</div><div class="xl-rn sel">12</div><div class="xl-rn sel">13</div><div class="xl-rn sel">14</div><div class="xl-rn sel">15</div><div class="xl-rn">16</div><div class="xl-rn">17</div><div class="xl-rn">18</div><div class="xl-rn">19</div><div class="xl-rn">20</div><div class="xl-rn">21</div><div class="xl-rn">22</div><div class="xl-rn">23</div><div class="xl-rn">24</div><div class="xl-rn">25</div><div class="xl-rn">26</div>
      </div>
      <div class="xl-cola">
        <div class="xl-c act">2021/11/1</div><div class="xl-c sel">2021/11/2</div><div class="xl-c sel">2021/11/3</div><div class="xl-c sel">2021/11/4</div><div class="xl-c sel">2021/11/5</div><div class="xl-c sel">2021/11/6</div><div class="xl-c sel">2021/11/7</div><div class="xl-c sel">2021/11/8</div><div class="xl-c sel">2021/11/9</div><div class="xl-c sel">2021/11/10</div><div class="xl-c sel">2021/11/11</div><div class="xl-c sel">2021/11/12</div><div class="xl-c sel">2021/11/13</div><div class="xl-c sel">2021/11/14</div><div class="xl-c sel">2021/11/15</div><div class="xl-c"></div><div class="xl-c"></div><div class="xl-c"></div><div class="xl-c"></div><div class="xl-c"></div><div class="xl-c"></div><div class="xl-c"></div><div class="xl-c"></div><div class="xl-c"></div><div class="xl-c"></div><div class="xl-c"></div>
      </div>
      <div class="xl-rest"></div>
      <div class="xl-range"><div class="xl-handle"></div></div>
      <svg class="xl-arrow" width="300" height="260" viewBox="0 0 300 260"><path d="M162 163l18 3-4 4 73 57-77-51-3 5z" fill="#ec4b4b"/></svg>
    </div>
  </div>
  <div class="xl-vs">
    <div class="xl-sbtn xl-vbtn"><svg width="8" height="5" viewBox="0 0 8 5"><path d="M0 5h8L4 0z" fill="#666"/></svg></div>
    <div class="xl-vthumb"></div>
    <div class="xl-vtrack"></div>
    <div class="xl-sbtn xl-vbtn"><svg width="8" height="5" viewBox="0 0 8 5"><path d="M0 0h8L4 5z" fill="#666"/></svg></div>
  </div>
</div>

<!-- sheet tabs and horizontal scrollbar -->
<div class="xl-bar d-flex">
  <div class="xl-nav d-flex">
    <svg width="5" height="8" viewBox="0 0 5 8"><path d="M5 0v8L0 4z" fill="#c4c4c4"/></svg>
    <svg width="5" height="8" viewBox="0 0 5 8"><path d="M0 0v8l5-4z" fill="#c4c4c4"/></svg>
  </div>
  <div class="xl-stab">Sheet1</div>
  <svg class="xl-plus" width="17" height="17" viewBox="0 0 17 17"><circle cx="8.500" cy="8.500" r="7.500" fill="none" stroke="#777" stroke-width="1.200"/><path d="M4.500 8.500h8M8.500 4.500v8" stroke="#666" stroke-width="1.600"/></svg>
  <svg class="xl-vdots" width="3" height="12" viewBox="0 0 3 12"><path d="M0 1h2M0 5h2M0 9h2" stroke="#999" stroke-width="2"/></svg>
  <div class="xl-hs d-flex">
    <div class="xl-sbtn xl-hbtn"><svg width="5" height="8" viewBox="0 0 5 8"><path d="M5 0v8L0 4z" fill="#666"/></svg></div>
    <div class="xl-hthumb"></div>
    <div class="xl-htrack"></div>
    <div class="xl-sbtn xl-hbtn"><svg width="5" height="8" viewBox="0 0 5 8"><path d="M0 0v8l5-4z" fill="#666"/></svg></div>
  </div>
</div>

<!-- status bar -->
<div class="xl-status d-flex">
  <span>就绪</span>
  <div class="xl-stats d-flex"><span>平均值: 2021/11/8</span><span>计数: 15</span><span>求和: 3727/11/17</span></div>
  <div class="xl-views d-flex">
    <div class="xl-view sel"><svg width="13" height="13" viewBox="0 0 13 13"><path d="M.5.500h12v12H.5zM4.500.500v12M8.500.500v12M.5 4.500h12M.5 8.500h12" fill="none" stroke="#555"/></svg></div>
    <div class="xl-view"><svg width="13" height="14" viewBox="0 0 13 14"><rect x=".5" y=".5" width="12" height="13" fill="none" stroke="#555"/><path d="M3 4h7M3 7h7M3 10h7" stroke="#777"/></svg></div>
    <div class="xl-view"><svg width="13" height="13" viewBox="0 0 13 13"><path d="M.5.500h12v12H.5zM6.500.500v7M.5 8.500h12" fill="none" stroke="#555"/></svg></div>
  </div>
  <div class="xl-zoomer d-flex">
    <svg width="7" height="7" viewBox="0 0 7 7"><path d="M0 3.500h6" stroke="#555" stroke-width="1.600"/></svg>
    <svg width="100" height="13" viewBox="0 0 100 13"><path d="M0 6.500h100" stroke="#999"/><rect x="48" y="1" width="3" height="11" fill="#555"/></svg>
    <svg width="11" height="11" viewBox="0 0 11 11"><path d="M1 5.500h9M5.500 1v9" stroke="#555" stroke-width="1.600"/></svg>
  </div>
  <span class="xl-pct">100%</span>
</div>

<!-- watermark -->
<svg class="xl-mark" width="260" height="125" viewBox="0 0 260 125">
  <g fill="#ffffff" fill-opacity=".45" stroke="#d0d0d0" stroke-width="1.200">
    <ellipse cx="118" cy="22" rx="10" ry="16"/>
    <ellipse cx="140" cy="24" rx="10" ry="14" transform="rotate(15 140 24)"/>
    <ellipse cx="102" cy="35" rx="10" ry="12" transform="rotate(-20 102 35)"/>
    <ellipse cx="154" cy="42" rx="9" ry="13" transform="rotate(-15 154 42)"/>
    <path d="M130 38c-9 0-12 7-17 13-6 7-11 11-10 18 1 7 7 9 14 9 6 0 9-2 14-2 6 0 10 3 16 2 6-1 10-5 10-11 0-7-6-11-11-17-5-6-8-12-16-12z"/>
  </g>
  <text x="10" y="82" font-size="52" font-weight="700">Bai</text>
  <text x="108" y="75" font-size="27" font-weight="700">du</text>
  <text class="cjk" x="167" y="80" font-size="40" font-weight="700">经验</text>
  <text x="10" y="114" font-size="30">jingyan.baidu.com</text>
</svg>

</div>
</body>
</html>
